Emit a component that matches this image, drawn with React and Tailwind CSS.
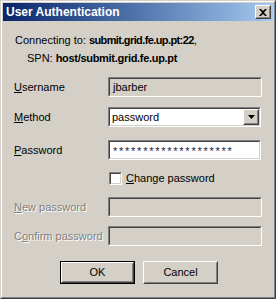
import React from "react";

const font = { fontFamily: '"Liberation Sans", Arial, sans-serif' };

function Sunken({ bg = "bg-[#d4d0c8]", className = "", children }) {
  return (
    <div className={`border border-t-[#808080] border-l-[#808080] border-b-white border-r-white ${className}`}>
      <div className={`h-full border border-t-[#404040] border-l-[#404040] border-b-[#d4d0c8] border-r-[#d4d0c8] ${bg} flex items-center`}>
        {children}
      </div>
    </div>
  );
}

function Raised({ className = "", children }) {
  return (
    <div className={`border border-t-white border-l-white border-b-[#404040] border-r-[#404040] bg-[#d4d0c8] ${className}`}>
      <div className="h-full border border-t-[#d4d0c8] border-l-[#d4d0c8] border-b-[#808080] border-r-[#808080] flex items-center justify-center">
        {children}
      </div>
    </div>
  );
}

function DisabledLabel({ children }) {
  return <span className="text-[#808080] [text-shadow:1px_1px_0_#ffffff]">{children}</span>;
}

export default function App() {
  return (
    <div className="w-[276px] h-[299px] text-[11px] text-black leading-none" style={font}>
      <div className="w-full h-full border border-t-[#d4d0c8] border-l-[#d4d0c8] border-b-[#404040] border-r-[#404040]">
        <div className="w-full h-full border border-t-white border-l-white border-b-[#808080] border-r-[#808080] bg-[#d4d0c8] p-px flex flex-col">
          {/* title bar */}
          <div className="h-[18px] bg-gradient-to-r from-[#0a246a] to-[#a6caf0] flex items-center pl-[3px] pr-[2px]">
            <span className="text-white font-bold text-[12px]">User Authentication</span>
            <div className="ml-auto">
              <Raised className="w-4 h-[14px]">
                <svg width="8" height="7" viewBox="0 0 8 7">
                  <path d="M0 0h2l2 2 2-2h2L5 3.5 8 7H6L4 5 2 7H0l3-3.5z" fill="#000" />
                </svg>
              </Raised>
            </div>
          </div>

          {/* body */}
          <div className="flex flex-col pl-[11px] pr-[11px]">
            <div className="mt-[13px] h-[13px] flex items-center">
              <span className="ml-[1px]">Connecting to: </span>
              <span className="font-bold ml-[3px] tracking-[-0.6px]">submit.grid.fe.up.pt:22</span>
              <span>,</span>
            </div>
            <div className="mt-[5px] h-[13px] flex items-center pl-[13px]">
              <span>SPN: </span>
              <span className="font-bold ml-[3px] tracking-[-0.3px]">host/submit.grid.fe.up.pt</span>
            </div>

            <div className="grid grid-cols-[94px_154px] items-center mt-[12px]">
              <span><span className="underline">U</span>sername</span>
              <Sunken className="h-[20px]">
                <span className="pl-[3px]">jbarber</span>
              </Sunken>
            </div>

            <div className="grid grid-cols-[94px_153px] items-center mt-[10px]">
              <span><span className="underline">M</span>ethod</span>
              <Sunken className="h-[20px]" bg="bg-white">
                <span className="pl-[2px]">password</span>
                <Raised className="ml-auto w-[16px] h-[16px]">
                  <svg width="7" height="4" viewBox="0 0 7 4">
                    <path d="M0 0h7L3.5 4z" fill="#000" />
                  </svg>
                </Raised>
              </Sunken>
            </div>

            <div className="grid grid-cols-[94px_153px] items-center mt-[13px]">
              <span><span className="underline">P</span>assword</span>
              <Sunken className="h-[20px]" bg="bg-white">
                <span className="pl-[3px] pt-[3px] tracking-[1.75px] text-[#202040]">********************</span>
              </Sunken>
            </div>

            <div className="flex items-center mt-[12px] pl-[95px] h-[13px]">
              <div className="w-[13px] h-[13px] border border-t-[#808080] border-l-[#808080] border-b-white border-r-white">
                <div className="w-full h-full bg-white border border-t-[#404040] border-l-[#404040] border-b-[#d4d0c8] border-r-[#d4d0c8]" />
              </div>
              <span className="ml-[4px]"><span className="underline">C</span>hange password</span>
            </div>

            <div className="grid grid-cols-[94px_154px] items-center mt-[12px]">
              <DisabledLabel><span className="underline">N</span>ew password</DisabledLabel>
              <Sunken className="h-[20px]" />
            </div>

            <div className="grid grid-cols-[94px_154px] items-center mt-[9px]">
              <DisabledLabel>C<span className="underline">o</span>nfirm password</DisabledLabel>
              <Sunken className="h-[20px]" />
            </div>

            <div className="flex justify-center gap-[8px] mt-[15px] pl-[2px]">
              <div className="border border-black">
                <Raised className="w-[73px] h-[21px]">
                  <span>OK</span>
                </Raised>
              </div>
              <Raised className="w-[75px] h-[23px]">
                <span>Cancel</span>
              </Raised>
            </div>
          </div>
        </div>
      </div>
    </div>
  );
}
